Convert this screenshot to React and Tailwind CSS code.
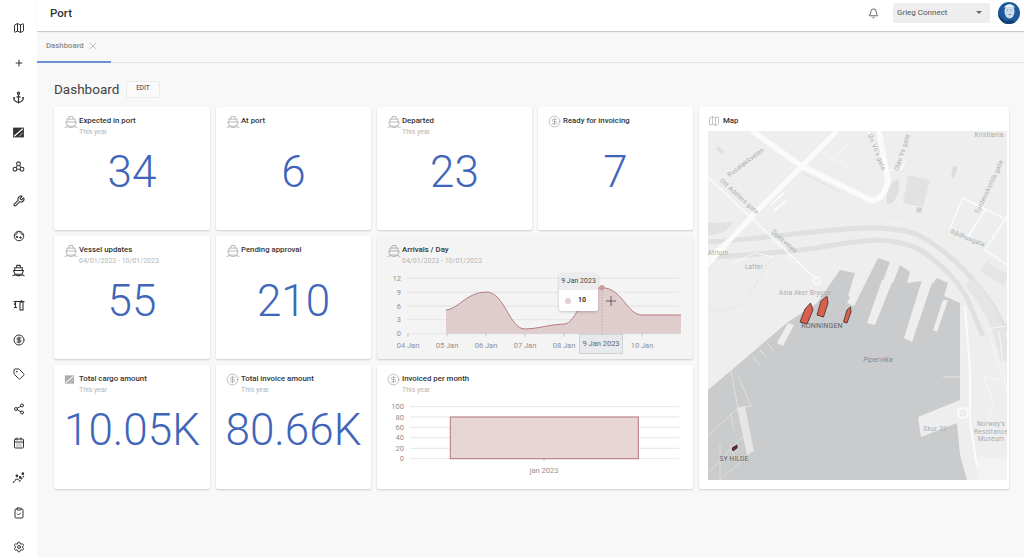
import { Anchor, Bell, CalendarDays, CircleDollarSign, ClipboardCheck, Map as MapIcon, Plus, Settings, Share2, Tag, Wrench, X } from 'lucide-react'

const FONT = { fontFamily: 'Roboto, "Liberation Sans", sans-serif' }

function ShipIcon({ className = '', strokeWidth = 1 }) {
  return (
    <svg viewBox="0 0 24 24" fill="none" stroke="currentColor" strokeWidth={strokeWidth} className={className}>
      <path d="M8 7 9 2.5h6L16 7" />
      <path d="M5 12V7h14v5" />
      <path d="M3 12h18l-2.5 7h-13z" />
      <path d="M1 21.5c2.5 0 2.5-1.5 5-1.5s2.500 1.500 6 1.500 3.500-1.500 6-1.500 2.500 1.500 5 1.500" />
    </svg>
  )
}

function CargoIcon({ className = '', color = '#333' }) {
  return (
    <svg viewBox="0 0 24 24" className={className}>
      <rect x="2" y="3" width="20" height="18" fill={color} />
      <path d="M4 19 20 5" stroke="#fff" strokeWidth="2.2" />
      <path d="M13 19 20 13" stroke="#fff" strokeWidth="1.2" />
    </svg>
  )
}

function NodesIcon({ className = '' }) {
  return (
    <svg viewBox="0 0 24 24" fill="none" stroke="currentColor" strokeWidth="2" className={className}>
      <circle cx="12" cy="7" r="3.5" />
      <circle cx="5.5" cy="17" r="3.5" />
      <circle cx="18.5" cy="17" r="3.5" />
      <path d="M10 10l-2.500 4M14 10l2.500 4M9 17h6" />
    </svg>
  )
}

function DialIcon({ className = '' }) {
  return (
    <svg viewBox="0 0 24 24" fill="none" stroke="currentColor" strokeWidth="2" className={className}>
      <circle cx="12" cy="12" r="9.500" />
      <path d="M3 11c4-1 5-4 6-7M13 3c1 3 4 6 8 7" />
      <circle cx="8" cy="14" r="1.500" fill="currentColor" />
      <circle cx="15" cy="15" r="1.500" fill="currentColor" />
    </svg>
  )
}

function CraneIcon({ className = '' }) {
  return (
    <svg viewBox="0 0 24 24" fill="none" stroke="currentColor" strokeWidth="2.200" className={className}>
      <path d="M1 5h22" />
      <path d="M5 5v12M2 17h6M5 8 2 11" />
      <rect x="14" y="6" width="6" height="16" />
      <path d="M17 2v3" />
    </svg>
  )
}

function ZigzagIcon({ className = '' }) {
  return (
    <svg viewBox="0 0 24 24" fill="none" stroke="currentColor" strokeWidth="2" className={className}>
      <path d="M2 20 9 12l5 5 8-10" strokeDasharray="4 1.500" />
      <circle cx="9" cy="7" r="1.500" fill="currentColor" />
      <circle cx="15" cy="10" r="1.500" fill="currentColor" />
      <circle cx="20" cy="3" r="1.500" fill="currentColor" />
    </svg>
  )
}

const sideIcons = [
  <MapIcon key="map" className="w-[12px] h-[12px]" />,
  <Plus key="plus" className="w-[10px] h-[10px]" strokeWidth={2.5} />,
  <Anchor key="anchor" className="w-[13px] h-[13px]" strokeWidth={2.2} />,
  <CargoIcon key="cargo" className="w-[13px] h-[13px]" />,
  <NodesIcon key="nodes" className="w-[13px] h-[13px]" />,
  <Wrench key="wrench" className="w-[12px] h-[12px]" strokeWidth={2.2} />,
  <DialIcon key="dial" className="w-[12px] h-[12px]" />,
  <ShipIcon key="ship" className="w-[13px] h-[13px]" strokeWidth={2} />,
  <CraneIcon key="crane" className="w-[12px] h-[12px]" />,
  <CircleDollarSign key="dollar" className="w-[12px] h-[12px]" />,
  <Tag key="tag" className="w-[12px] h-[12px]" />,
  <Share2 key="share" className="w-[12px] h-[12px]" />,
  <CalendarDays key="cal" className="w-[12px] h-[12px]" />,
  <ZigzagIcon key="trend" className="w-[13px] h-[13px]" />,
  <ClipboardCheck key="clip" className="w-[12px] h-[12px]" />,
  <Settings key="settings" className="w-[12px] h-[12px]" />,
]

function CardHeader({ icon, title, sub }) {
  return (
    <div className="flex items-start h-[20px]">
      <div className="w-[15px] mt-[-1px] flex-none text-[#8a8a8a]">{icon}</div>
      <div>
        <div className="text-[7.8px] leading-[10px] font-medium text-[#333]">{title}</div>
        {sub && <div className="text-[7px] leading-[9px] mt-[2px] text-[#b5b5b5]">{sub}</div>}
      </div>
    </div>
  )
}

const shipHead = <ShipIcon className="w-[14px] h-[14px]" />
const dollarHead = <CircleDollarSign className="w-[13px] h-[13px]" strokeWidth={1} />

function StatCard({ icon, title, sub, value }) {
  return (
    <div className="bg-white rounded-[2px] shadow-[0_1px_2px_rgba(0,0,0,0.18)] pt-[9px] px-[10px] flex flex-col">
      <CardHeader icon={icon} title={title} sub={sub} />
      <div className="text-center text-[44px] leading-[48px] font-light text-[#3f66b8] mt-[12px] mx-[-10px] whitespace-nowrap">{value}</div>
    </div>
  )
}

const gridText = 'text-[7.5px]'

function ArrivalsChart() {
  const rows = [[13.3, '12'], [27.3, '9'], [41, '6'], [54.7, '3'], [68.7, '0']]
  const ticks = [[31, '04 Jan'], [70, '05 Jan'], [109, '06 Jan'], [148, '07 Jan'], [187, '08 Jan'], [265, '10 Jan']]
  const curve = 'M69 45C80 45 90 27 109 27C128 27 132 64 148 64C160 64 175 59 187 59C200 59 205 22.7 225 22.7C245 22.7 250 50 265 50L304 50'
  return (
    <div className="relative h-[94px] mx-[-10px]">
      <svg viewBox="0 0 316 94" className="w-[316px] h-[94px]">
        {rows.map(([y, label]) => (
          <g key={label}>
            <line x1="30" x2="302" y1={y} y2={y} stroke="#dfdfdf" strokeWidth="0.8" />
            <text x="24" y={y + 2.5} textAnchor="end" fill="#909090" className={gridText}>{label}</text>
          </g>
        ))}
        <path d={`${curve}L304 68.7L69 68.7Z`} fill="#dcc5c7" fillOpacity="0.85" />
        <path d={curve} fill="none" stroke="#b77d80" strokeWidth="1" />
        {ticks.map(([x, label]) => (
          <g key={label}>
            <line x1={x} x2={x} y1="68.7" y2="71.5" stroke="#aaa" strokeWidth="0.6" />
            <text x={x} y="82.5" textAnchor="middle" fill="#909090" className={gridText}>{label}</text>
          </g>
        ))}
        <line x1="225" x2="225" y1="23" y2="69" stroke="#b0a0a0" strokeWidth="0.7" strokeDasharray="1.5 1.5" />
        <circle cx="225" cy="22.7" r="2.6" fill="#cf9a9d" />
        <path d="M234 31v10M229 36h10" stroke="#333" strokeWidth="0.7" />
      </svg>
      {/* tooltip over the chart */}
      <div className="absolute left-[182px] top-[8px] w-[39px] h-[38px] bg-white rounded-[2px] shadow-[0_1px_3px_rgba(0,0,0,0.2)] overflow-hidden">
        <div className="h-[17px] bg-[#ececee] text-[7px] leading-[17px] text-center text-[#444] whitespace-nowrap">9 Jan 2023</div>
        <div className="flex items-center h-[21px] pl-[6px]">
          <span className="w-[6px] h-[6px] rounded-full bg-[#e6cfd1]" />
          <span className="ml-[7px] text-[7px] font-bold text-[#333]">10</span>
        </div>
      </div>
      <div className="absolute left-[202px] top-[69px] w-[44px] h-[20px] bg-[#e8e9ed] border border-[#cfd1d6] text-[7.5px] leading-[18px] text-center text-[#666] whitespace-nowrap">9 Jan 2023</div>
    </div>
  )
}

function InvoicedChart() {
  const rows = [[12.7, '100'], [23, '80'], [33.3, '60'], [43.7, '40'], [54.3, '20'], [64.7, '0']]
  return (
    <svg viewBox="0 0 316 94" className="w-[316px] h-[94px] mx-[-10px]">
      {rows.map(([y, label]) => (
        <g key={label}>
          <line x1="33" x2="302" y1={y} y2={y} stroke="#dfdfdf" strokeWidth="0.8" />
          <text x="27" y={y + 2.5} textAnchor="end" fill="#909090" className={gridText}>{label}</text>
        </g>
      ))}
      <rect x="73.3" y="23" width="188" height="41.7" fill="#e8d6d7" stroke="#b67478" strokeWidth="1" />
      <line x1="167" x2="167" y1="64.7" y2="67.5" stroke="#aaa" strokeWidth="0.6" />
      <text x="167" y="78.5" textAnchor="middle" fill="#909090" className={gridText}>jan 2023</text>
    </svg>
  )
}

function MapLabel({ x, y, rotate = 0, size = 6.5, fill = '#a9abad', italic, children }) {
  return (
    <text
      x={x}
      y={y}
      textAnchor="middle"
      fill={fill}
      fontSize={size}
      fontStyle={italic ? 'italic' : undefined}
      letterSpacing="0.2"
      transform={rotate ? `rotate(${rotate} ${x} ${y})` : undefined}
    >
      {children}
    </text>
  )
}

function MapDrawing() {
  return (
    <svg viewBox="0 0 299 349" className="w-[299px] h-[349px] block">
      <rect width="299" height="349" fill="#eeeeee" />
      {/* tunnels */}
      <path d="M0 111C60 108 110 98 159 97C180 97 195 99 205 102C230 112 262 140 285 175L299 200" fill="none" stroke="#dfe1df" strokeWidth="5" />
      <path d="M0 126C40 125 60 122 92 119C130 114 150 109 172 109C190 110 205 115 212 119C230 130 248 148 258 165L275 205" fill="none" stroke="#dfe1df" strokeWidth="5" />
      <path d="M275 135L299 150M262 150C280 175 290 190 299 230" fill="none" stroke="#e4e5e4" strokeWidth="12" />
      <path d="M110 140C130 115 160 90 190 85C230 90 270 130 299 135" fill="none" stroke="#e7e7e7" strokeWidth="0.8" />
      {/* patches */}
      <polygon points="200,44 222,49 215,76 195,72" fill="#e2e2e2" />
      <ellipse cx="185" cy="61" rx="5" ry="13" transform="rotate(20 185 61)" fill="#dfdfdf" />
      <polygon points="0,92 26,91 16,101 0,105" fill="#e2e2e2" />
      <polygon points="209,76 214,77 213,82 208,81" fill="#cfcfcf" />
      <polygon points="245,35 250,36 246,47 243,46" fill="#dcdcdc" />
      <polygon points="10,15 16,20 14,23 8,18" fill="#e0e0e0" />
      {/* water */}
      <polygon
        points="0,349 0,259 80,191 109,172 125,149 132,139 147,142 140,165 149,169 170,127 182,131 174,152 185,152 192,134 202,141 199,152 214,150 225,152 229,147 240,152 236,165 252,172 252,269 210,286 213,306 249,292 252,324 259,349"
        fill="#cacbcc"
      />
      {/* piers */}
      <polygon points="159,192 167,194 185,149 174,149" fill="#eeeeee" />
      <polygon points="196,207 204,211 225,149 214,149" fill="#eeeeee" />
      <polygon points="225,199 229,201 240,169 235,169" fill="#eeeeee" />
      <polygon points="69,212 75,215 86,194 80,192" fill="#eeeeee" />
      <polygon points="139,172 146,175 150,167 143,165" fill="#eeeeee" />
      <polygon points="29,277 37,275 46,320 39,324" fill="#e6e6e6" />
      <path d="M45 226 52 234M52 219 58 226M59 212 66 220M235 246 252 246" stroke="#e8e8e8" strokeWidth="0.9" />
      <path d="M0 305 30 277M0 342 40 300M12 349 42 322M12 314 12 349M23 282 26 300M22 313 28 330M30 245 43 275 30 277 23 240" fill="none" stroke="#e4e4e4" strokeWidth="0.8" />
      {/* right-hand land details */}
      <path d="M257 176 262 240 262 290 268 330 275 349" fill="none" stroke="#fbfbfb" strokeWidth="2" />
      <path d="M280 198 298 195M280 198 295 250 275 245 285 270 280 290M291 200 298 260" fill="none" stroke="#fafafa" strokeWidth="0.8" />
      <circle cx="255" cy="282" r="5" fill="none" stroke="#fbfbfb" strokeWidth="2" />
      <rect x="270" y="326" width="29" height="23" fill="#f3f3f3" />
      {/* roads */}
      <path d="M44 0 92 34 162 69C170 71 177 64 180 50L171 0" fill="none" stroke="#fbfbfb" strokeWidth="5.5" strokeLinejoin="round" />
      <path d="M129 0 45 84-1 134" fill="none" stroke="#fbfbfb" strokeWidth="5" />
      <path d="M0 127 46 86" fill="none" stroke="#fbfbfb" strokeWidth="3" />
      <path d="M62 74 76 62M66 80 78 70" stroke="#fbfbfb" strokeWidth="2" />
      <path d="M0 46 109 149" fill="none" stroke="#fbfbfb" strokeWidth="1.5" />
      <circle cx="109" cy="150" r="3.5" fill="#eee" stroke="#fbfbfb" strokeWidth="1.5" />
      <path d="M160 0 182 46M178 40 194 38 197 30" fill="none" stroke="#fbfbfb" strokeWidth="1.5" />
      <path d="M255 67 299 89M255 67 242 97M277 79 260 106M299 85 277 119 299 134" fill="none" stroke="#fbfbfb" strokeWidth="1.5" />
      <path d="M112 20 142 37M124 28 143 10" fill="none" stroke="#fafafa" strokeWidth="0.8" />
      <path d="M95 42 132 61" fill="none" stroke="#dddddd" strokeWidth="1" />
      <path d="M20 134 47 122 66 126M79 125C82 130 85 133 92 131" fill="none" stroke="#fafafa" strokeWidth="0.9" />
      <path d="M63 129C48 145 40 190 0 178" fill="none" stroke="#e2e2e2" strokeWidth="0.8" />
      {/* ships */}
      <path d="M102.500 172 105 179 99 193 92 191 97 178Z" fill="#d9604c" stroke="#3b2a28" strokeWidth="0.8" strokeLinejoin="round" />
      <path d="M119 165 120 172 115.500 186 109 184 113 170Z" fill="#d9604c" stroke="#3b2a28" strokeWidth="0.8" strokeLinejoin="round" />
      <path d="M142.500 176 143 181 139 192 135.500 191 139 179Z" fill="#d9604c" stroke="#3b2a28" strokeWidth="0.8" strokeLinejoin="round" />
      <path d="M24 317 29 314 29 317 25 320Z" fill="#7c2b22" stroke="#222" strokeWidth="0.8" />
      {/* labels */}
      <MapLabel x={281} y={6}>Kristiania</MapLabel>
      <MapLabel x={39} y={33} rotate={-37}>Ruseløkkveien</MapLabel>
      <MapLabel x={30} y={67} rotate={42}>Ott Adelers gate</MapLabel>
      <MapLabel x={75} y={112} rotate={42}>Dokkveien</MapLabel>
      <MapLabel x={196} y={22} rotate={-72}>Olav Vs gate</MapLabel>
      <MapLabel x={167} y={22} rotate={68}>Øn VII's gate</MapLabel>
      <MapLabel x={283} y={57} rotate={-65}>Tordenskiolds gate</MapLabel>
      <MapLabel x={259} y={109} rotate={22}>Rådhusgata</MapLabel>
      <MapLabel x={10} y={124}>Atrium</MapLabel>
      <MapLabel x={46} y={138}>Latter</MapLabel>
      <MapLabel x={97} y={164}>Asia Aker Brygge</MapLabel>
      <MapLabel x={114} y={197} size={7} fill="#5f6264">RONNINGEN</MapLabel>
      <MapLabel x={170} y={231} italic size={7} fill="#85888a">Pipervika</MapLabel>
      <MapLabel x={227} y={300}>Skur 33</MapLabel>
      <MapLabel x={283} y={295}>Norway's</MapLabel>
      <MapLabel x={283} y={302.5}>Resistance</MapLabel>
      <MapLabel x={283} y={310}>Museum</MapLabel>
      <MapLabel x={26} y={330} fill="#5f6264">SY HILDE</MapLabel>
    </svg>
  )
}

export default function App() {
  return (
    <div className="w-[1024px] h-[558px] flex overflow-hidden bg-[#f8f8f8] text-[#333]" style={FONT}>
      {/* Sidebar */}
      <aside className="w-[37px] flex-none bg-white pt-[11px] flex flex-col items-center text-[#333]">
        {sideIcons.map((icon, i) => (
          <div key={i} className="h-[34.6px] flex-none flex items-center justify-center">{icon}</div>
        ))}
      </aside>

      <div className="flex-1 flex flex-col min-w-0">
        {/* Header */}
        <header className="h-[31px] flex-none bg-white shadow-[0_1px_1px_rgba(0,0,0,0.18)] flex items-center pl-[13px] relative">
          <span className="text-[11.5px] font-medium text-[#333] relative top-[-2px]">Port</span>
          <Bell className="w-[11px] h-[11px] ml-auto text-[#555] relative top-[-2px]" />
          <div className="ml-[14px] w-[97px] h-[20px] bg-[#eeeeee] rounded-[2px] flex items-center pl-[4px] pr-[8px] text-[8px] text-[#555] relative top-[-3px]">
            Grieg Connect
            <span className="ml-auto w-0 h-0 border-x-[3px] border-x-transparent border-t-[3px] border-t-[#666]" />
          </div>
          <div className="ml-[8px] mr-[4px] w-[22px] h-[22px] rounded-full overflow-hidden relative top-[-3px]">
            <svg viewBox="0 0 22 22" className="w-[22px] h-[22px]">
              <rect width="22" height="22" fill="#1d5a9c" />
              <path d="M0 22V12C3 16 6 18 8 20L8 22Z" fill="#0e3a6b" />
              <ellipse cx="11.500" cy="9.500" rx="5" ry="7" fill="#cfdbe8" />
              <path d="M6 6C8 1 15 1 17 6C14 4 9 4 6 6Z" fill="#f2f5f8" />
              <path d="M5 22C7 17 16 17 18 22Z" fill="#123f73" />
              <path d="M9 8h1.200M12.500 8h1.200M10.500 12.500h2.500" stroke="#54708f" strokeWidth="0.8" />
            </svg>
          </div>
        </header>

        {/* Tabs */}
        <div className="h-[32px] flex-none border-b border-[#e6e6e6] flex">
          <div className="w-[74px] h-[32px] border-b-2 border-[#6f8fd0] flex items-center pl-[9px] text-[#888]">
            <span className="text-[7.8px] font-medium">Dashboard</span>
            <X className="w-[12px] h-[12px] ml-[3px]" strokeWidth={1} />
          </div>
        </div>

        {/* Content */}
        <main className="flex-1 pl-[17px] pt-[17px]">
          <div className="flex items-center h-[18px] mb-[9px]">
            <h1 className="text-[13.5px] text-[#444] font-normal w-[72px]">Dashboard</h1>
            <button className="w-[34px] h-[17px] border border-[#eaeaea] bg-[#fafafa] rounded-[2px] text-[6.5px] font-medium text-[#666]">EDIT</button>
          </div>
          <div className="grid grid-cols-[156px_155px_155px_155px_310px] grid-rows-[123px_123px_124px] gap-[6px]">
            <StatCard icon={shipHead} title="Expected in port" sub="This year" value="34" />
            <StatCard icon={shipHead} title="At port" value="6" />
            <StatCard icon={shipHead} title="Departed" sub="This year" value="23" />
            <StatCard icon={dollarHead} title="Ready for invoicing" value="7" />
            <div className="row-span-3 bg-white rounded-[2px] shadow-[0_1px_2px_rgba(0,0,0,0.18)] pt-[8px] pl-[9px] pr-[2px]">
              <div className="flex items-start h-[16px]">
                <MapIcon className="w-[12px] h-[12px] text-[#8a8a8a]" strokeWidth={1} />
                <span className="ml-[3px] text-[7.8px] leading-[10px] mt-[1px] font-medium text-[#333]">Map</span>
              </div>
              <MapDrawing />
            </div>

            <StatCard icon={shipHead} title="Vessel updates" sub="04/01/2023 - 10/01/2023" value="55" />
            <StatCard icon={shipHead} title="Pending approval" value="210" />
            <div className="col-span-2 bg-[#f4f4f4] rounded-[2px] shadow-[0_1px_2px_rgba(0,0,0,0.18)] pt-[9px] px-[10px] overflow-hidden">
              <CardHeader icon={shipHead} title="Arrivals / Day" sub="04/01/2023 - 10/01/2023" />
              <ArrivalsChart />
            </div>

            <StatCard icon={<CargoIcon className="w-[11px] h-[11px] mt-[1px]" color="#aaa" />} title="Total cargo amount" sub="This year" value="10.05K" />
            <StatCard icon={dollarHead} title="Total invoice amount" sub="This year" value="80.66K" />
            <div className="col-span-2 bg-white rounded-[2px] shadow-[0_1px_2px_rgba(0,0,0,0.18)] pt-[9px] px-[10px] overflow-hidden">
              <CardHeader icon={dollarHead} title="Invoiced per month" sub="This year" />
              <InvoicedChart />
            </div>
          </div>
        </main>
      </div>
    </div>
  )
}
